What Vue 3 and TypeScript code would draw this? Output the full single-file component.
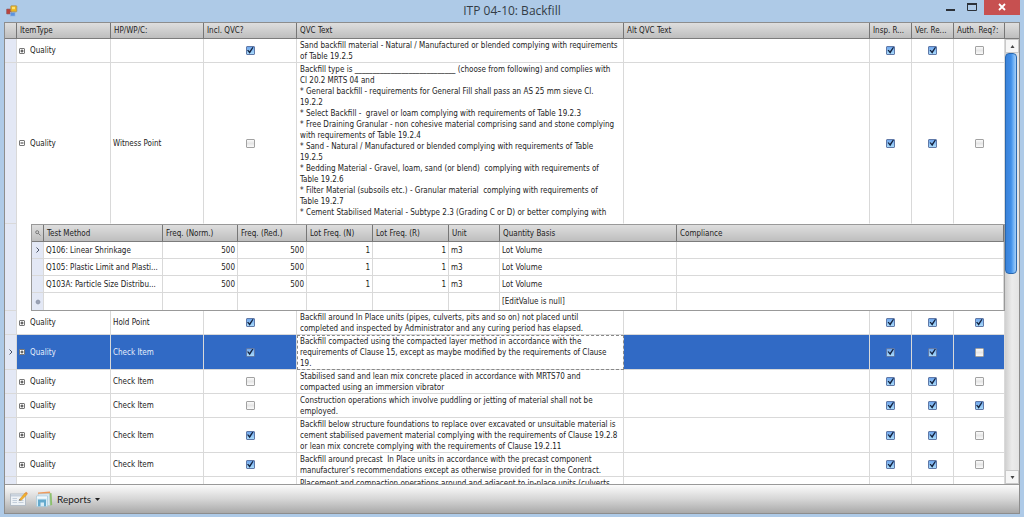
<script setup lang="ts">
type Item = {
  kind: string
  point: string
  incl: boolean
  lines: string[]
  insp: boolean
  ver: boolean
  auth: boolean
  open?: boolean
  selected?: boolean
}

type Test = { method: string; norm: string; red: string; lotN: string; lotR: string; unit: string; basis: string }

const headings = ['ItemType', 'HP/WP/C:', 'Incl. QVC?', 'QVC Text', 'Alt QVC Text', 'Insp. R...', 'Ver. Re...', 'Auth. Req?:']
const testHeadings = ['Test Method', 'Freq. (Norm.)', 'Freq. (Red.)', 'Lot Freq. (N)', 'Lot Freq. (R)', 'Unit', 'Quantity Basis', 'Compliance']

const items: Item[] = [
  {
    kind: 'Quality', point: '', incl: true, insp: true, ver: true, auth: false,
    lines: ['Sand backfill material - Natural / Manufactured or blended complying with requirements', 'of Table 19.2.5'],
  },
  {
    kind: 'Quality', point: 'Witness Point', incl: false, insp: true, ver: true, auth: false, open: true,
    lines: [
      'Backfill type is ____________________________ (choose from following) and complies with',
      'Cl 20.2 MRTS 04 and',
      '* General backfill - requirements for General Fill shall pass an AS 25 mm sieve Cl.',
      '19.2.2',
      '* Select Backfill -  gravel or loam complying with requirements of Table 19.2.3',
      '* Free Draining Granular - non cohesive material comprising sand and stone complying',
      'with requirements of Table 19.2.4',
      '* Sand - Natural / Manufactured or blended complying with requirements of Table',
      '19.2.5',
      '* Bedding Material - Gravel, loam, sand (or blend)  complying with requirements of',
      'Table 19.2.6',
      '* Filter Material (subsoils etc.) - Granular material  complying with requirements of',
      'Table 19.2.7',
      '* Cement Stabilised Material - Subtype 2.3 (Grading C or D) or better complying with',
    ],
  },
  {
    kind: 'Quality', point: 'Hold Point', incl: true, insp: true, ver: true, auth: true,
    lines: ['Backfill around In Place units (pipes, culverts, pits and so on) not placed until', 'completed and inspected by Administrator and any curing period has elapsed.'],
  },
  {
    kind: 'Quality', point: 'Check Item', incl: true, insp: true, ver: true, auth: false, selected: true,
    lines: ['Backfill compacted using the compacted layer method in accordance with the', 'requirements of Clause 15, except as maybe modified by the requirements of Clause', '19.'],
  },
  {
    kind: 'Quality', point: 'Check Item', incl: false, insp: true, ver: true, auth: false,
    lines: ['Stabilised sand and lean mix concrete placed in accordance with MRTS70 and', 'compacted using an immersion vibrator'],
  },
  {
    kind: 'Quality', point: 'Check Item', incl: false, insp: true, ver: true, auth: true,
    lines: ['Construction operations which involve puddling or jetting of material shall not be', 'employed.'],
  },
  {
    kind: 'Quality', point: 'Check Item', incl: true, insp: true, ver: true, auth: false,
    lines: ['Backfill below structure foundations to replace over excavated or unsuitable material is', 'cement stabilised pavement material complying with the requirements of Clause 19.2.8', 'or lean mix concrete complying with the requirements of Clause 19.2.11'],
  },
  {
    kind: 'Quality', point: 'Check Item', incl: true, insp: true, ver: true, auth: false,
    lines: ['Backfill around precast  In Place units in accordance with the precast component', "manufacturer's recommendations except as otherwise provided for in the Contract."],
  },
]

const lastLine = 'Placement and compaction operations around and adjacent to in-place units (culverts,'

const tests: Test[] = [
  { method: 'Q106: Linear Shrinkage', norm: '500', red: '500', lotN: '1', lotR: '1', unit: 'm3', basis: 'Lot Volume' },
  { method: 'Q105: Plastic Limit and Plasti...', norm: '500', red: '500', lotN: '1', lotR: '1', unit: 'm3', basis: 'Lot Volume' },
  { method: 'Q103A: Particle Size Distribu...', norm: '500', red: '500', lotN: '1', lotR: '1', unit: 'm3', basis: 'Lot Volume' },
]
</script>

<template>
  <div class="window">
    <header class="titlebar">
      <svg class="app-icon" viewBox="0 0 12 12" aria-hidden="true">
        <rect x="0.5" y="4" width="5" height="5" rx="0.6" fill="#b8433c" stroke="#8e6a6e" stroke-width="0.6" />
        <rect x="4.5" y="7.5" width="4.5" height="3.5" fill="#5b93e0" stroke="#8fb2e4" stroke-width="0.6" />
        <rect x="4.8" y="0.8" width="6" height="6" rx="0.6" fill="#edb51c" stroke="#a8925a" stroke-width="0.8" />
        <rect x="6" y="1.8" width="3" height="2.4" fill="#ffe26e" />
      </svg>
      <h1>ITP 04-10: Backfill</h1>
      <div class="controls">
        <button type="button" class="ctl" aria-label="Minimize">
          <svg width="24" height="15" viewBox="0 0 24 15"><path d="M7 10H16" stroke="#2c3138" stroke-width="2" /></svg>
        </button>
        <button type="button" class="ctl" aria-label="Maximize">
          <svg width="21" height="15" viewBox="0 0 21 15"><path d="M4.5 4.500H13.5V10.5H4.500Z" fill="none" stroke="#2c3138" /><path d="M4 4H14" stroke="#2c3138" stroke-width="2" /></svg>
        </button>
        <button type="button" class="ctl close" aria-label="Close">
          <svg width="36" height="15" viewBox="0 0 36 15"><path d="M15 4L21 10M21 4L15 10" stroke="#fff" stroke-width="1.8" /></svg>
        </button>
      </div>
    </header>

    <main class="client">
      <div class="grid">
        <div class="rows">
          <table class="items">
            <colgroup>
              <col class="c-ind" /><col class="c-type" /><col class="c-point" /><col class="c-point" />
              <col class="c-text" /><col /><col class="c-req" /><col class="c-req" /><col class="c-auth" />
            </colgroup>
            <thead>
              <tr>
                <th class="corner"></th>
                <th v-for="h in headings" :key="h" scope="col">{{ h }}</th>
              </tr>
            </thead>
            <tbody>
              <template v-for="(item, i) in items" :key="i">
                <tr :class="{ selected: item.selected, tall: item.open }">
                  <td class="ind">
                    <svg v-if="item.selected" class="arrow" viewBox="0 0 6 6" aria-hidden="true"><path d="M1.5 0.5L4 3L1.5 5.5" /></svg>
                  </td>
                  <td>
                    <div class="type-box">
                      <button type="button" class="expander" :aria-label="item.open ? 'Collapse row' : 'Expand row'">
                        <svg width="6" height="6" viewBox="0 0 6 6"><rect x="0.5" y="0.5" width="5" height="5" rx="0.5" /><path :d="item.open ? 'M1.5 3H4.5' : 'M1.5 3H4.5M3 1.5V4.5'" /></svg>
                      </button>
                      <span>{{ item.kind }}</span>
                    </div>
                  </td>
                  <td>{{ item.point }}</td>
                  <td class="mid"><input type="checkbox" :checked="item.incl" aria-label="Incl. QVC?" /></td>
                  <td class="text"><p v-for="(line, n) in item.lines" :key="n">{{ line }}</p></td>
                  <td></td>
                  <td class="mid"><input type="checkbox" :checked="item.insp" aria-label="Insp. Req" /></td>
                  <td class="mid"><input type="checkbox" :checked="item.ver" aria-label="Ver. Req" /></td>
                  <td class="mid"><input type="checkbox" :checked="item.auth" aria-label="Auth. Req?" /></td>
                </tr>
                <tr v-if="item.open" class="detail">
                  <td class="ind"></td>
                  <td colspan="8" class="detail-cell">
                    <div class="detail-box">
                      <table class="tests">
                        <colgroup>
                          <col class="t-ind" /><col class="t-method" /><col class="t-norm" /><col class="t-red" />
                          <col class="t-lot" /><col class="t-lotr" /><col class="t-unit" /><col class="t-basis" /><col />
                        </colgroup>
                        <thead>
                          <tr>
                            <th class="corner">
                              <svg class="lens" viewBox="0 0 6 6" aria-hidden="true"><circle cx="2.2" cy="2.2" r="1.5" /><path d="M3.3 3.3L5.5 5.5" /></svg>
                            </th>
                            <th v-for="h in testHeadings" :key="h" scope="col">{{ h }}</th>
                          </tr>
                        </thead>
                        <tbody>
                          <tr v-for="(t, n) in tests" :key="n">
                            <td class="ind">
                              <svg v-if="n === 0" class="arrow" viewBox="0 0 6 6" aria-hidden="true"><path d="M1.5 0.5L4 3L1.5 5.5" /></svg>
                            </td>
                            <td>{{ t.method }}</td>
                            <td class="num">{{ t.norm }}</td>
                            <td class="num">{{ t.red }}</td>
                            <td class="num">{{ t.lotN }}</td>
                            <td class="num">{{ t.lotR }}</td>
                            <td>{{ t.unit }}</td>
                            <td>{{ t.basis }}</td>
                            <td></td>
                          </tr>
                          <tr>
                            <td class="ind">
                              <svg class="star" viewBox="0 0 6 6" aria-hidden="true"><path d="M3 0.5V5.5M0.5 3H5.5" /><rect x="1.7" y="1.7" width="2.6" height="2.6" /></svg>
                            </td>
                            <td></td><td></td><td></td><td></td><td></td><td></td>
                            <td>[EditValue is null]</td>
                            <td></td>
                          </tr>
                        </tbody>
                      </table>
                    </div>
                  </td>
                </tr>
              </template>
              <tr>
                <td class="ind"></td><td></td><td></td><td></td>
                <td class="text"><p>{{ lastLine }}</p></td>
                <td></td><td></td><td></td><td></td>
              </tr>
            </tbody>
          </table>
        </div>
        <div class="scroll">
          <div class="scroll-head"></div>
          <button type="button" class="scroll-btn" aria-label="Scroll up">
            <svg width="5" height="3" viewBox="0 0 5 3"><path d="M2.5 0L4.5 3H0.5Z" fill="#444" /></svg>
          </button>
          <div class="track"><div class="thumb"></div></div>
          <button type="button" class="scroll-btn" aria-label="Scroll down">
            <svg width="5" height="3" viewBox="0 0 5 3"><path d="M0.5 0H4.5L2.5 3Z" fill="#444" /></svg>
          </button>
        </div>
      </div>

      <footer class="toolbar">
        <button type="button" class="tool" aria-label="Edit">
          <svg width="18" height="16" viewBox="0 0 18 16">
            <rect x="0.5" y="3" width="15" height="11.5" fill="#eef2f6" stroke="#b4bdc7" />
            <rect x="1" y="3.5" width="14" height="2" fill="#c6d0dc" />
            <path d="M2.5 7.500H7M2.5 9.500H7M2.5 11.500H7M8.5 9.500H13.5M8.5 11.500H13.5" stroke="#c3cedb" />
            <path d="M9.500 8.500L15 2L17 3.500L11.300 9.300Z" fill="#f3b02c" stroke="#cf8a1c" stroke-width="0.5" />
            <path d="M15 2L16 0.800L17.800 2.200L17 3.500Z" fill="#e88f3c" />
            <path d="M9 9.500L9.500 8.300L10.800 9.200Z" fill="#444" />
          </svg>
        </button>
        <button type="button" class="tool reports">
          <svg width="17" height="16" viewBox="0 0 17 16">
            <path d="M2 1.500L14 0.500L14.500 4H2Z" fill="#ee9a5c" />
            <path d="M11 3L15.500 2L16.200 14L12 15Z" fill="#8cc06a" />
            <path d="M2 3L13.500 2.500L14 14.500L5 15Z" fill="#d8e8f2" stroke="#b3cbd9" stroke-width="0.5" />
            <path d="M0.500 5H11.500V15.500H0.500Z" fill="#d6ebf5" stroke="#9fc4d8" stroke-width="0.6" />
            <path d="M2 15.300V8.500H10V15.300H8V11.500H4.500V15.300Z" fill="#64aacd" />
            <path d="M1 5.500H11V7.500H1Z" fill="#f2f9fc" />
          </svg>
          <span>Reports</span>
          <svg width="5" height="3" viewBox="0 0 5 3"><path d="M0 0H5L2.500 3Z" fill="#222" /></svg>
        </button>
      </footer>
    </main>
  </div>
</template>

<style>
html,
body {
  margin: 0;
  background: #aecae7;
}
</style>

<style scoped>
.window {
  box-sizing: border-box;
  display: flex;
  flex-direction: column;
  height: 100vh;
  padding: 0 4px 3px;
  background: #aecae7;
  color: #222;
  font-family: Tahoma, "DejaVu Sans Condensed", "DejaVu Sans", sans-serif;
  font-size: 8px;
  line-height: 11px;
}

button {
  display: flex;
  align-items: center;
  justify-content: center;
  margin: 0;
  padding: 0;
  border: 0;
  background: none;
  color: inherit;
  font: inherit;
}

svg {
  display: block;
}

.titlebar {
  display: grid;
  grid-template-columns: 1fr auto 1fr;
  align-items: center;
  height: 22px;
}

.app-icon {
  width: 12px;
  height: 12px;
  margin-left: 2px;
}

h1 {
  margin: 0;
  font: 400 12px/20px "Open Sans", sans-serif;
  color: #333c46;
}

.controls {
  display: flex;
  align-self: start;
  justify-content: flex-end;
}

.close {
  background: #c75050;
}

.client {
  display: flex;
  flex: 1;
  flex-direction: column;
  min-height: 0;
  border: 1px solid #8d8d8d;
}

.grid {
  display: flex;
  flex: 1;
  min-height: 0;
  background: #fff;
}

.rows {
  flex: 1;
  min-width: 0;
  overflow: hidden;
}

table {
  width: 100%;
  table-layout: fixed;
  border-collapse: separate;
  border-spacing: 0;
}

.c-ind { width: 12px; }
.c-type { width: 94px; }
.c-point { width: 93px; }
.c-text { width: 327px; }
.c-req { width: 42px; }
.c-auth { width: 51px; }
.t-ind { width: 12px; }
.t-method { width: 119px; }
.t-norm { width: 75px; }
.t-red { width: 69px; }
.t-lot { width: 66px; }
.t-lotr { width: 76px; }
.t-unit { width: 51px; }
.t-basis { width: 177px; }

th {
  box-sizing: border-box;
  height: 16px;
  padding: 0 3px;
  border-right: 1px solid #767676;
  border-bottom: 1px solid #7c7c7c;
  background: linear-gradient(#dedede, #bebebe);
  font-weight: 400;
  text-align: left;
  white-space: nowrap;
}

.tests th {
  height: 17px;
}

td {
  box-sizing: border-box;
  padding: 0 2px;
  border-right: 1px solid #d9d9d9;
  border-bottom: 1px solid #d9d9d9;
  vertical-align: middle;
  white-space: nowrap;
}

th.corner,
td.ind {
  padding: 0 2px;
}

td.ind {
  background: #e3e8f5;
}

td.mid {
  text-align: center;
}

td.text {
  padding: 1px 3px 0;
  vertical-align: top;
}

.text p {
  margin: 0;
  white-space: pre;
}

.tall td {
  height: 161px;
}

.tall td:not(.ind) {
  border-bottom-color: transparent;
}

.type-box {
  display: flex;
  align-items: center;
  gap: 5px;
}

.expander rect {
  fill: #fff;
  stroke: #777;
}

.expander path {
  stroke: #333;
}

.arrow,
.star,
.lens {
  width: 6px;
  height: 6px;
  margin: 0 auto;
  fill: none;
  stroke: #4b5468;
}

.star {
  stroke: #8d95a8;
}

.lens {
  stroke: #666;
  stroke-width: 0.8;
}

.selected td:not(.ind, .text) {
  background: #316ac5;
  color: #e6eefb;
}

.selected td.text {
  outline: 1px dashed #888;
  outline-offset: -1px;
}

input[type="checkbox"] {
  appearance: none;
  display: block;
  box-sizing: border-box;
  width: 9px;
  height: 9px;
  margin: 0 auto;
  border: 1px solid #a2a2a2;
  border-radius: 1px;
  background: linear-gradient(#fafafa, #e6e6e6 50%, #fbfbfb);
}

input[type="checkbox"]:checked {
  border-color: #6079a8;
  background: linear-gradient(#6fa6ec, #a9dbfb);
}

input[type="checkbox"]:checked::before {
  content: "";
  display: block;
  width: 7px;
  height: 7px;
  background: #14233f;
  clip-path: polygon(8% 45%, 24% 38%, 42% 62%, 86% 0, 100% 8%, 46% 96%);
}

td.detail-cell {
  padding: 0 0 0 14px;
  border-right: 0;
  border-bottom: 0;
}

.detail-box {
  border: 1px solid #999;
}

.tests td {
  height: 17px;
}

.tests tr:last-child td {
  border-bottom: 0;
}

.tests td.num {
  text-align: right;
}

.scroll {
  display: flex;
  flex-direction: column;
  width: 14px;
}

.scroll-head {
  box-sizing: border-box;
  height: 16px;
  border-bottom: 1px solid #7c7c7c;
  background: linear-gradient(#dedede, #bebebe);
}

.scroll-btn {
  box-sizing: border-box;
  height: 14px;
  border: 1px solid #c9c9c9;
  background: #f6f6f6;
}

.track {
  flex: 1;
  background: linear-gradient(90deg, #cfcfcf, #ececec 50%, #e4e4e4);
}

.thumb {
  box-sizing: border-box;
  width: 12px;
  height: 53%;
  border: 1px solid #2868b0;
  border-radius: 4px;
  background: linear-gradient(90deg, #3b82d8, #3f8ee8 50%, #6fb2f6 75%, #a5cdf5);
}

.toolbar {
  display: flex;
  align-items: center;
  gap: 8px;
  height: 28px;
  padding: 0 5px;
  border-top: 1px solid #999;
  background: linear-gradient(#fbfbfb, #d6d6d6 50%, #a9a9a9);
}

.reports {
  gap: 4px;
  font-family: Lato, "Open Sans", sans-serif;
  font-size: 10px;
}
</style>
